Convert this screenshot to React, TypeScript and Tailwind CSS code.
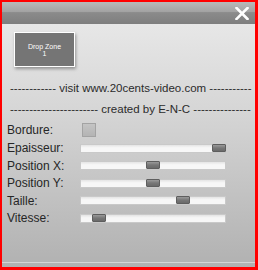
const sliders = [
  { label: "Epaisseur:", value: 1 },
  { label: "Position X:", value: 0.5 },
  { label: "Position Y:", value: 0.5 },
  { label: "Taille:", value: 0.73 },
  { label: "Vitesse:", value: 0.09 },
];

const TRACK_W = 146;
const THUMB_W = 14;

function Slider({ value }: { value: number }) {
  return (
    <div className="relative w-[146px] h-[9px] border border-[#c9c9c9] bg-[linear-gradient(to_bottom,#e4e4e4,#f7f7f7_40%,#f7f7f7)]">
      <div
        className="absolute top-[-1px] h-[8px] w-[14px] rounded-[1px] border border-[#5e5e5e] bg-[linear-gradient(to_bottom,#9a9a9a,#777777_50%,#6a6a6a)]"
        style={{ left: value * (TRACK_W - THUMB_W) - 1 }}
      />
    </div>
  );
}

export default function App() {
  return (
    <div className="w-[258px] h-[270px] border-l-2 border-t-2 border-r-[3px] border-b-[3px] border-[#ff0000] flex flex-col font-['Liberation_Sans',Arial,sans-serif] overflow-hidden">
      {/* title bar */}
      <div className="h-[22px] shrink-0 flex items-center justify-end pr-[6px] bg-[linear-gradient(to_bottom,#b9b9b9_0%,#a2a2a2_45%,#8b8b8b_48%,#7e7e7e_100%)]">
        <svg width="14" height="13" viewBox="0 0 14 13">
          <path d="M1.5 1 L12.5 12 M12.5 1 L1.5 12" stroke="#ffffff" strokeWidth="2.6" strokeLinecap="square" />
        </svg>
      </div>

      <div className="flex-1 flex flex-col bg-[linear-gradient(to_bottom,#e7e7e7,#d6d6d6_35%,#b1b1b1)]">
        <div className="ml-[12px] mt-[8px] w-[61px] h-[35px] border border-white bg-[#757575] shadow-[1px_2px_3px_rgba(0,0,0,0.35)] flex flex-col items-center justify-center text-white text-[7px] leading-[7px]">
          <span>Drop Zone</span>
          <span>1</span>
        </div>

        <div className="mt-[11px] h-[21px] flex items-center pl-[8px] whitespace-nowrap text-[11.5px] text-[#2b2b2b]">
          ------------ visit www.20cents-video.com -----------
        </div>
        <div className="h-[22px] flex items-center pl-[8px] whitespace-nowrap text-[11.5px] text-[#2b2b2b]">
          ----------------------- created by E-N-C ---------------
        </div>

        <div className="h-[18.5px] flex items-center pl-[5px] text-[12px] text-[#262626]">
          <span className="w-[75px]">Bordure:</span>
          <div className="w-[14px] h-[14px] border border-[#a3a3a3] bg-[linear-gradient(to_bottom,#c4c4c4,#b4b4b4)]" />
        </div>

        {sliders.map((s) => (
          <div key={s.label} className="h-[17.5px] flex items-center pl-[5px] text-[12px] text-[#262626]">
            <span className="w-[73px]">{s.label}</span>
            <Slider value={s.value} />
          </div>
        ))}

        <div className="flex-1" />
        <div className="h-px bg-[#d4d4d4]" />
        <div className="h-[4px]" />
      </div>
    </div>
  );
}
